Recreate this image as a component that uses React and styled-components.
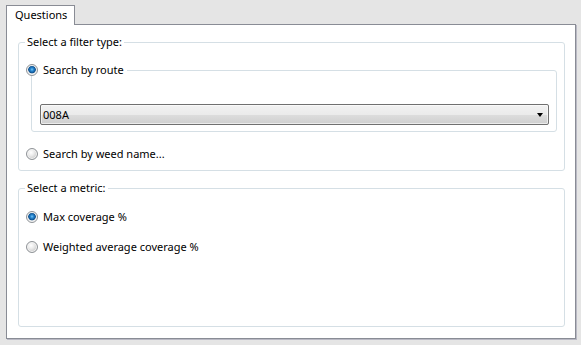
import React from "react";
import styled, { createGlobalStyle } from "styled-components";

const GlobalStyle = createGlobalStyle`
  html, body {
    margin: 0;
    padding: 0;
    background-color: #e5e5e5;
  }
  * {
    box-sizing: border-box;
  }
`;

const Page = styled.div`
  width: 581px;
  height: 345px;
  padding: 5px 5px 6px 6px;
  display: flex;
  flex-direction: column;
  font-family: "Noto Sans", "DejaVu Sans", sans-serif;
  font-size: 11px;
  color: #000;
`;

const TabStrip = styled.div`
  display: flex;
  height: 19px;
`;

const Tab = styled.div`
  position: relative;
  z-index: 1;
  width: 69px;
  height: 20px;
  padding: 1px 0 0 8px;
  line-height: 15px;
  background-color: #fff;
  border: 1px solid #898c95;
  border-bottom: none;
`;

const Panel = styled.div`
  flex: 1;
  display: flex;
  flex-direction: column;
  gap: 17px;
  padding: 17px 10px 11px 11px;
  background-color: #fff;
  border: 1px solid #898c95;
  box-shadow: 1px 1px 0 #b9b9c4;
`;

const Group = styled.div`
  position: relative;
  display: flex;
  flex-direction: column;
  padding: 0 7px 0 7px;
  border: 1px solid #d5dfe5;
  border-radius: 3px;
  flex: ${(p) => (p.$fill ? 1 : "none")};
  padding-bottom: ${(p) => p.$bottom || 0}px;
`;

const Legend = styled.div`
  position: absolute;
  top: -8px;
  left: 6px;
  padding: 0 2px;
  line-height: 14px;
  background-color: #fff;
`;

const RadioRow = styled.label`
  display: flex;
  align-items: center;
  gap: 5px;
  height: 12px;
  margin-top: ${(p) => p.$top || 0}px;
  line-height: 14px;
  white-space: nowrap;
`;

const RadioDot = styled.span`
  flex: none;
  width: 12px;
  height: 12px;
  border-radius: 50%;
  border: 1px solid #8f9397;
  background: ${(p) =>
    p.$checked
      ? "radial-gradient(circle at 50% 45%, #7ec9f4 0, #2a8ad4 1.5px, #0e4f8c 3.5px, #dfe3e6 4.2px, #f4f4f4 5.5px)"
      : "radial-gradient(circle at 40% 35%, #ffffff 0, #ececec 3px, #d4d4d4 5.5px)"};
  box-shadow: inset 0 0 0 1px #f5f5f5;
`;

const SubGroup = styled.div`
  position: relative;
  margin: 27px 0 0 5px;
  padding: 33px 7px 6px 8px;
  border: 1px solid #d5dfe5;
  border-radius: 3px;
`;

const SubLegend = styled.div`
  position: absolute;
  top: -7px;
  left: -6px;
  padding-right: 3px;
  background-color: #fff;
`;

const Combo = styled.div`
  display: flex;
  align-items: center;
  justify-content: space-between;
  height: 21px;
  padding: 0 5px 0 2px;
  border: 1px solid #707070;
  border-radius: 2px;
  background: linear-gradient(#f2f2f2 0%, #ebebeb 50%, #dddddd 51%, #cfcfcf 100%);
  box-shadow: inset 0 0 0 1px rgba(255, 255, 255, 0.6);
`;

const Arrow = styled.span`
  width: 0;
  height: 0;
  border-left: 3.5px solid transparent;
  border-right: 3.5px solid transparent;
  border-top: 4px solid #000;
`;

const Radio = ({ checked, label, top }) => (
  <RadioRow $top={top}>
    <RadioDot $checked={checked} />
    <span>{label}</span>
  </RadioRow>
);

const App = () => {
  return (
    <Page>
      <GlobalStyle />
      <TabStrip>
        <Tab>Questions</Tab>
      </TabStrip>
      <Panel>
        <Group $bottom={10}>
          <Legend>Select a filter type:</Legend>
          <SubGroup>
            <SubLegend>
              <Radio checked label="Search by route" />
            </SubLegend>
            <Combo>
              <span>008A</span>
              <Arrow />
            </Combo>
          </SubGroup>
          <Radio label="Search by weed name..." top={16} />
        </Group>
        <Group $fill>
          <Legend>Select a metric:</Legend>
          <Radio checked label="Max coverage %" top={22} />
          <Radio label="Weighted average coverage %" top={18} />
        </Group>
      </Panel>
    </Page>
  );
};

export default App;
